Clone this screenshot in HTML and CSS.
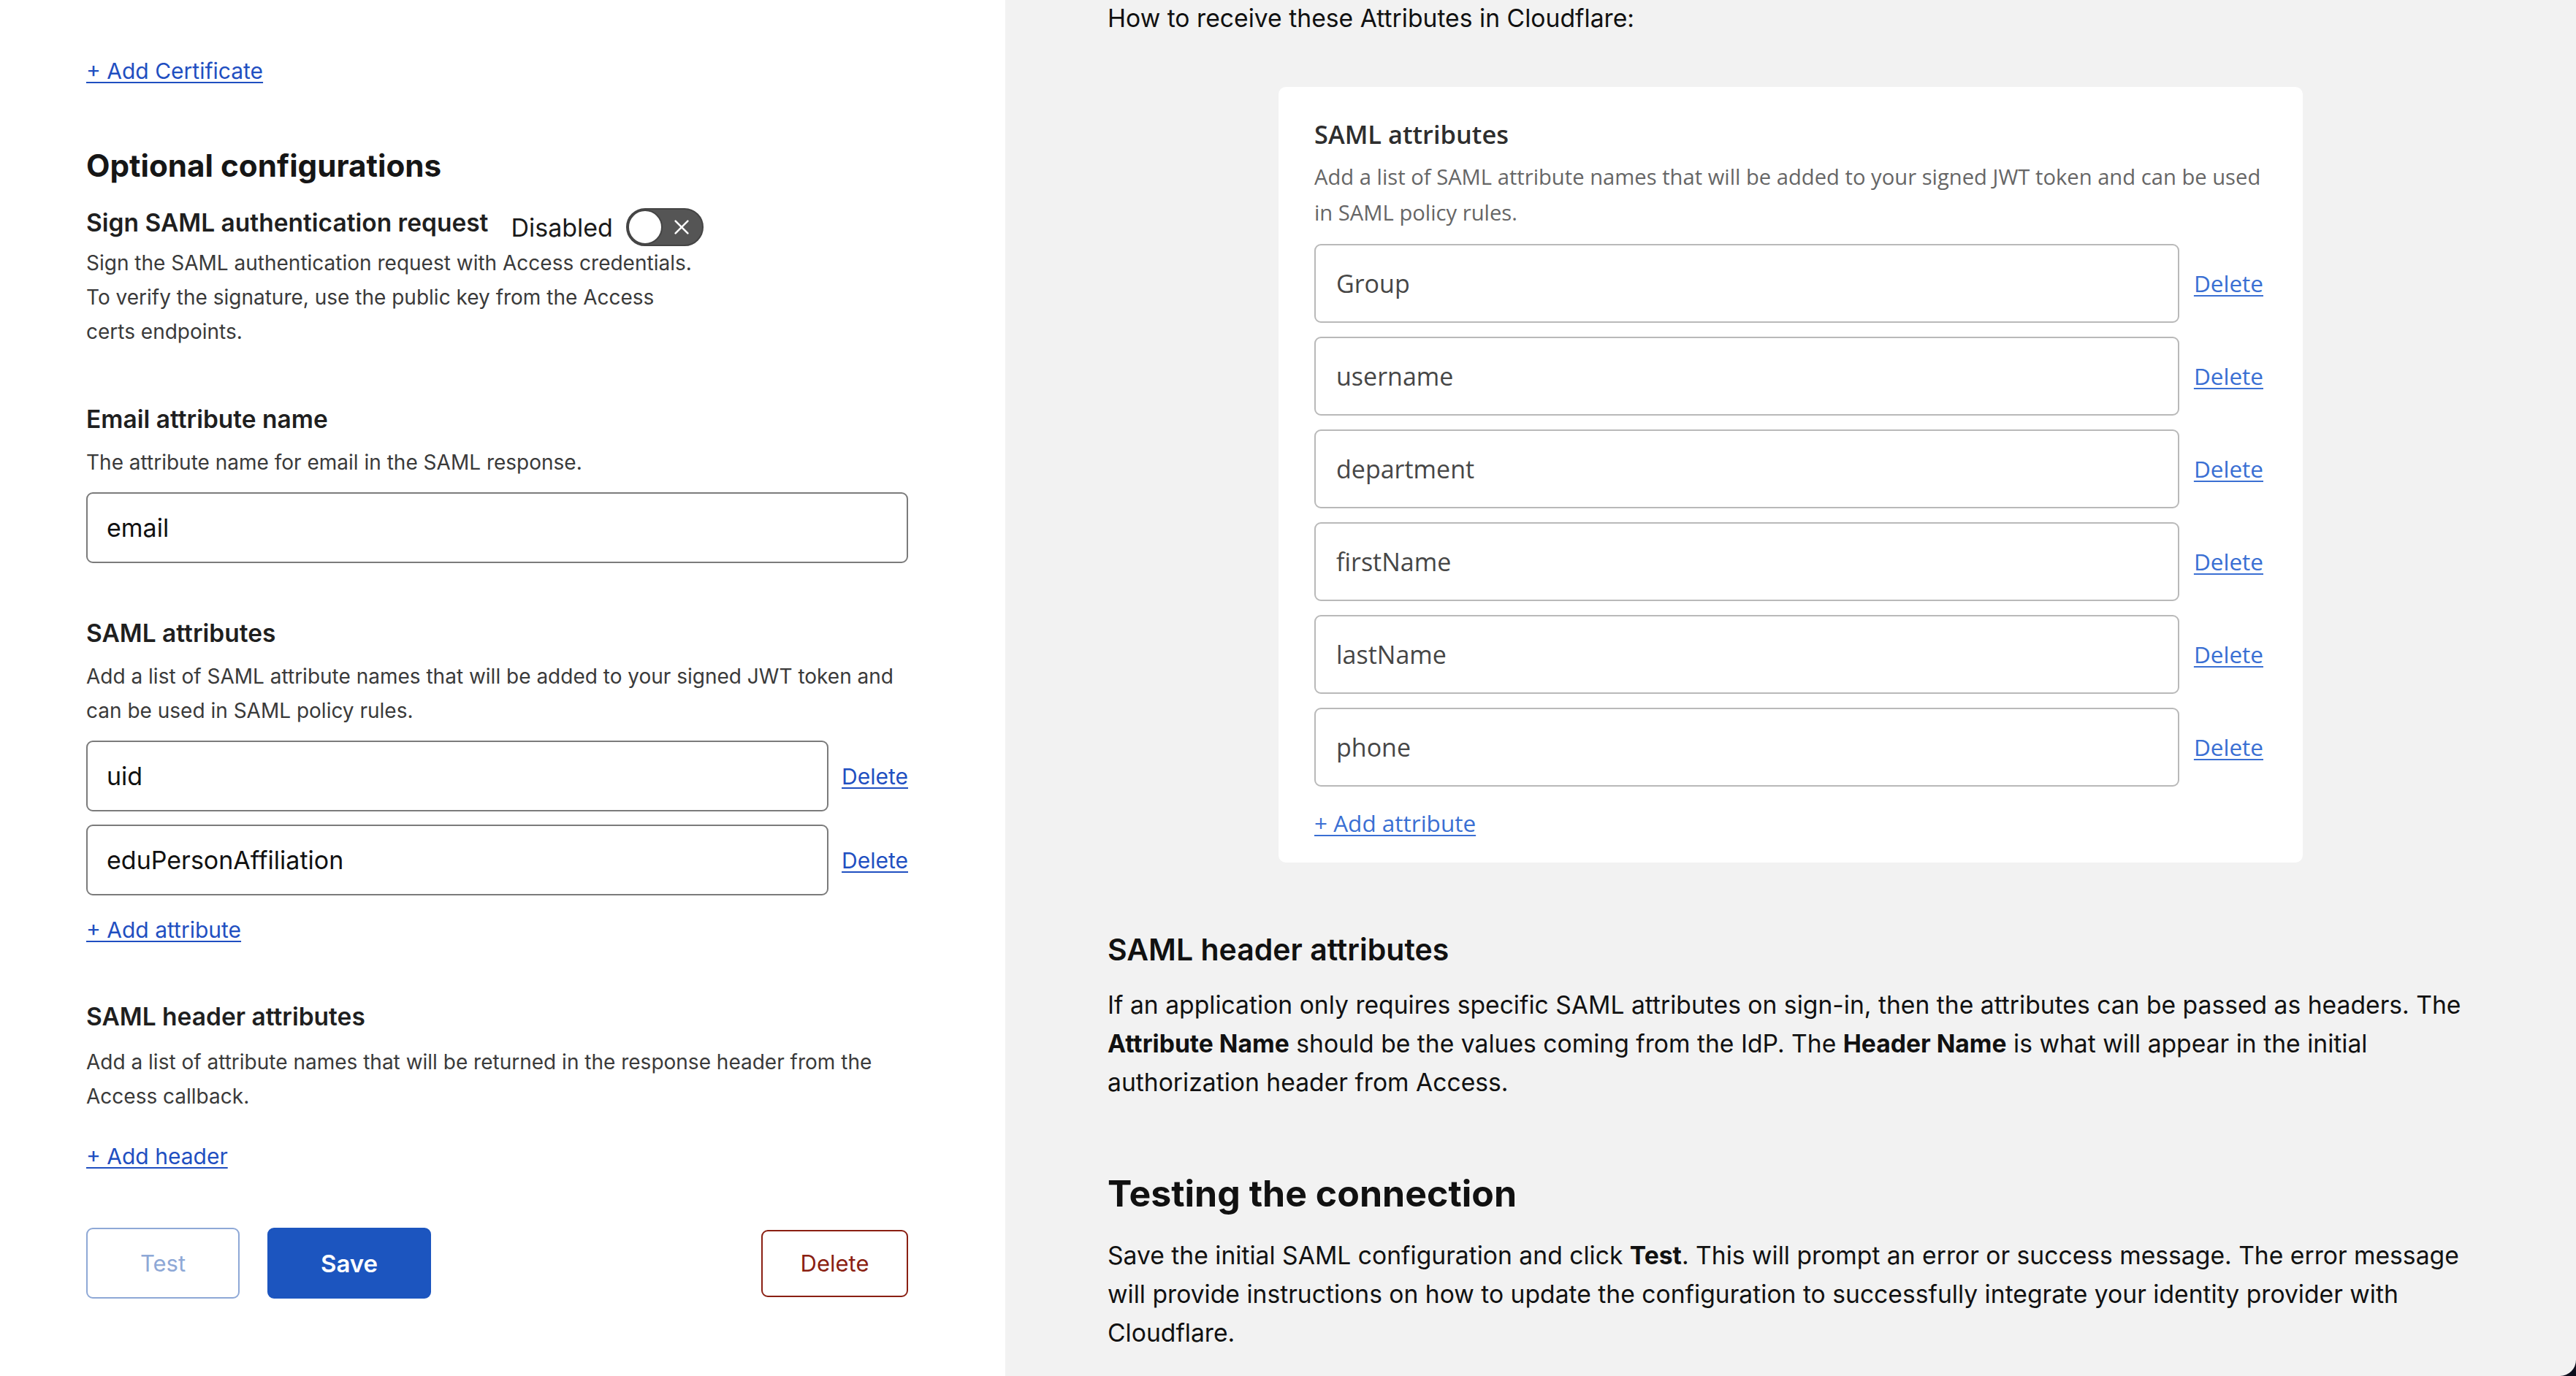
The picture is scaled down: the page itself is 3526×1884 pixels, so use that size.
FILE: index.html
```html
<!DOCTYPE html>
<html lang="en">
<head>
<meta charset="utf-8">
<title>SAML configuration</title>
<link rel="stylesheet" href="styles.css">
</head>
<body>
<div class="page">
  <section class="left">
    <a class="link add-cert" href="#">+ Add Certificate</a>
    <h2 class="section-title">Optional configurations</h2>
    <div class="toggle-row">
      <h3 class="field-title">Sign SAML authentication request</h3>
      <span class="toggle-label">Disabled</span>
      <span class="toggle">
        <span class="knob"></span>
        <svg class="toggle-x" viewBox="0 0 20 20" width="28" height="28"><path d="M4 4 L16 16 M16 4 L4 16" stroke="#fff" stroke-width="1.8" stroke-linecap="round" fill="none"/></svg>
      </span>
    </div>
    <p class="field-desc sign-desc">Sign the SAML authentication request with Access credentials. To verify the signature, use the public key from the Access certs endpoints.</p>

    <h3 class="field-title gap-lg">Email attribute name</h3>
    <p class="field-desc gap-sm">The attribute name for email in the SAML response.</p>
    <div class="input gap-in">email</div>

    <h3 class="field-title gap-lg">SAML attributes</h3>
    <p class="field-desc gap-sm">Add a list of SAML attribute names that will be added to your signed JWT token and can be used in SAML policy rules.</p>
    <div class="attr-row gap-in">
      <div class="input">uid</div>
      <a class="link" href="#">Delete</a>
    </div>
    <div class="attr-row gap-row">
      <div class="input">eduPersonAffiliation</div>
      <a class="link" href="#">Delete</a>
    </div>
    <a class="link add-attr" href="#">+ Add attribute</a>

    <h3 class="field-title gap-xl">SAML header attributes</h3>
    <p class="field-desc gap-md">Add a list of attribute names that will be returned in the response header from the Access callback.</p>
    <a class="link add-header" href="#">+ Add header</a>

    <div class="actions">
      <button class="btn btn-test" type="button">Test</button>
      <button class="btn btn-save" type="button">Save</button>
      <button class="btn btn-delete" type="button">Delete</button>
    </div>
  </section>

  <section class="right">
    <p class="intro">How to receive these Attributes in Cloudflare:</p>
    <div class="card">
      <h4 class="card-title">SAML attributes</h4>
      <p class="card-desc">Add a list of SAML attribute names that will be added to your signed JWT token and can be used in SAML policy rules.</p>
      <div class="card-rows">
        <div class="card-row"><div class="card-input">Group</div><a class="card-link" href="#">Delete</a></div>
        <div class="card-row"><div class="card-input">username</div><a class="card-link" href="#">Delete</a></div>
        <div class="card-row"><div class="card-input">department</div><a class="card-link" href="#">Delete</a></div>
        <div class="card-row"><div class="card-input">firstName</div><a class="card-link" href="#">Delete</a></div>
        <div class="card-row"><div class="card-input">lastName</div><a class="card-link" href="#">Delete</a></div>
        <div class="card-row"><div class="card-input">phone</div><a class="card-link" href="#">Delete</a></div>
      </div>
      <a class="card-link card-add" href="#">+ Add attribute</a>
    </div>

    <h3 class="doc-h3">SAML header attributes</h3>
    <p class="doc-p">If an application only requires specific SAML attributes on sign-in, then the attributes can be passed as headers. The <strong>Attribute Name</strong> should be the values coming from the IdP. The <strong>Header Name</strong> is what will appear in the initial authorization header from Access.</p>

    <h2 class="doc-h2">Testing the connection</h2>
    <p class="doc-p doc-p2">Save the initial SAML configuration and click <strong>Test</strong>. This will prompt an error or success message. The error message will provide instructions on how to update the configuration to successfully integrate your identity provider with Cloudflare.</p>
  </section>
</div>
</body>
</html>
```

FILE: styles.css
```css
* { box-sizing: border-box; }

html, body {
  margin: 0;
  padding: 0;
}

body {
  width: 3526px;
  height: 1884px;
  overflow: hidden;
  background: #0d0d1c;
  font-family: "Inter", "Liberation Sans", sans-serif;
}

.page {
  display: flex;
  width: 3526px;
  height: 1884px;
}

/* ---------- left form ---------- */
.left {
  width: 1376px;
  flex: none;
  background: #ffffff;
  padding: 77px 0 0 118px;
  display: flex;
  flex-direction: column;
  align-items: flex-start;
}

.left > * { width: 1125px; }

.link {
  color: #1f4fc1;
  text-decoration: underline;
  text-underline-offset: 4px;
  text-decoration-thickness: 2px;
  font-size: 30px;
  line-height: 40px;
}

.left > .link { width: auto; }

.section-title {
  margin: 85px 0 0;
  font-size: 42.2px;
  line-height: 50px;
  font-weight: 700;
  color: #161616;
}

.toggle-row {
  margin-top: 33px;
  height: 52px;
  display: flex;
  align-items: center;
}

.field-title {
  margin: 0;
  font-size: 33.5px;
  line-height: 40px;
  font-weight: 600;
  color: #1f1f1f;
}

.toggle-row .field-title { align-self: flex-start; }

.toggle-label {
  margin-left: 31px;
  font-size: 34px;
  color: #1a1a1a;
}

.toggle {
  position: relative;
  margin-left: 18px;
  width: 106px;
  height: 52px;
  border-radius: 26px;
  background: #555555;
  border: 2px solid #444444;
  display: flex;
  align-items: center;
  justify-content: flex-end;
  padding-right: 14px;
}

.knob {
  position: absolute;
  left: 0;
  top: 0;
  width: 48px;
  height: 48px;
  border-radius: 50%;
  background: #ffffff;
  border: 2px solid #444444;
}

.field-desc {
  margin: 0;
  font-size: 28px;
  line-height: 47px;
  color: #3a3a3a;
}

.sign-desc { max-width: 838px; }

.gap-lg { margin-top: 76px; }
.gap-xl { margin-top: 79px; }
.gap-sm { margin-top: 16px; }
.gap-md { margin-top: 19px; }
.gap-in { margin-top: 17px; }
.gap-row { margin-top: 18px; }

.input {
  height: 97px;
  border: 2px solid #7b7b7b;
  border-radius: 9px;
  padding: 0 26px;
  display: flex;
  align-items: center;
  font-size: 34px;
  color: #111111;
  background: #fff;
}

.attr-row {
  display: flex;
  align-items: center;
  gap: 18px;
}

.attr-row .input { flex: 1; }

.add-attr { margin-top: 27px; }
.add-header { margin-top: 38px; }

.actions {
  margin-top: 78px;
  display: flex;
  align-items: center;
}

.btn {
  font-family: "Inter", "Liberation Sans", sans-serif;
  font-size: 31px;
  border-radius: 9px;
  background: #fff;
  cursor: pointer;
}

.btn-test {
  width: 210px;
  height: 97px;
  border: 2px solid #8ea8d6;
  color: #8ea8d6;
}

.btn-save {
  margin-left: 38px;
  width: 224px;
  height: 97px;
  border: 2px solid #1c55bf;
  background: #1c55bf;
  color: #ffffff;
  font-size: 33px;
  font-weight: 600;
}

.btn-delete {
  margin-left: auto;
  width: 201px;
  height: 92px;
  border: 2px solid #8a1f12;
  color: #8a1f12;
}

/* ---------- right docs ---------- */
.right {
  flex: 1;
  background: #f2f2f2;
  border-bottom-right-radius: 22px;
  padding: 5px 0 0 140px;
  display: flex;
  flex-direction: column;
  align-items: flex-start;
}

.right > * { width: 1870px; }

.intro {
  margin: 0;
  font-size: 33.7px;
  line-height: 40px;
  color: #111;
}

.card {
  margin: 74px 0 0 234px;
  width: 1402px;
  background: #ffffff;
  border-radius: 10px;
  padding: 43px 54px 34px 49px;
  font-family: "Open Sans", "Noto Sans", sans-serif;
  display: flex;
  flex-direction: column;
  align-items: flex-start;
}

.card-title {
  margin: 0;
  font-size: 34.4px;
  line-height: 44px;
  font-weight: 600;
  color: #2e2e2e;
}

.card-desc {
  margin: 12px 0 0;
  font-size: 29.2px;
  line-height: 49px;
  color: #666;
}

.card-rows {
  margin-top: 18px;
  width: 100%;
  display: flex;
  flex-direction: column;
  gap: 19px;
}

.card-row {
  display: flex;
  align-items: center;
  gap: 20px;
}

.card-input {
  flex: 1;
  height: 108px;
  border: 2px solid #b9b9b9;
  border-radius: 9px;
  padding: 0 28px;
  display: flex;
  align-items: center;
  font-size: 34px;
  color: #464646;
}

.card-link {
  color: #3a6fd3;
  text-decoration: underline;
  text-underline-offset: 4px;
  text-decoration-thickness: 2px;
  font-size: 31.5px;
  line-height: 40px;
}

.card-add { margin-top: 30px; }

.doc-h3 {
  margin: 97px 0 0;
  font-size: 41px;
  line-height: 44px;
  font-weight: 600;
  color: #111;
}

.doc-p {
  margin: 26.5px 0 0;
  font-size: 33.65px;
  line-height: 53px;
  color: #111;
}

.doc-p strong { font-weight: 700; }

.doc-h2 {
  margin: 96px 0 0;
  font-size: 50px;
  line-height: 60px;
  font-weight: 700;
  color: #111;
}

.doc-p2 { margin-top: 28px; }
```
